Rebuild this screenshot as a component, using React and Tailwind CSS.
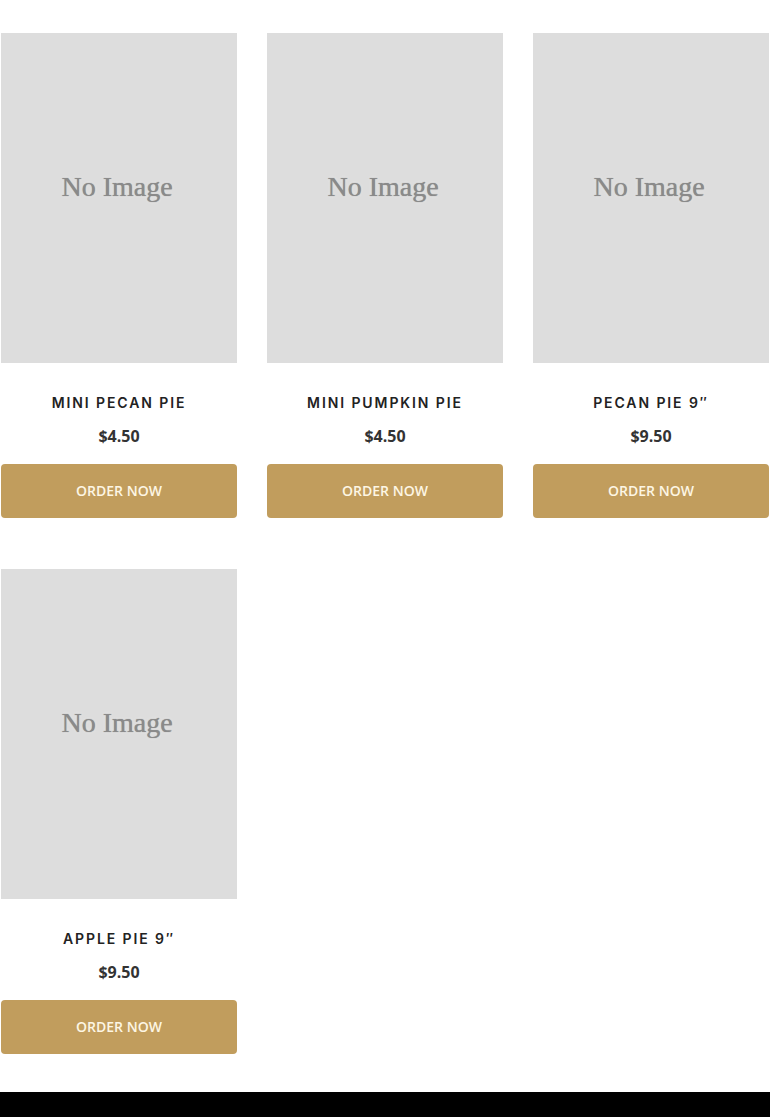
const products = [
  { name: 'Mini Pecan Pie', price: '$4.50' },
  { name: 'Mini Pumpkin Pie', price: '$4.50' },
  { name: 'Pecan Pie 9″', price: '$9.50' },
  { name: 'Apple Pie 9″', price: '$9.50' },
]

function ProductCard({ name, price }) {
  return (
    <div className="flex flex-col">
      <div className="h-[330px] bg-[#dddddd] flex items-center justify-center pb-[22px] pr-[4px]">
        <span
          className="text-[28px] text-[#8a8a8a]"
          style={{ fontFamily: '"Liberation Serif", serif', textShadow: '0 0 1px #8a8a8a, 0 0 3px #eeeeee' }}
        >
          No Image
        </span>
      </div>
      <h3
        className="mt-[31px] text-center text-[14px] leading-[18px] font-semibold uppercase tracking-[1.9px] text-[#222222]"
        style={{ fontFamily: 'Inter, "Open Sans", sans-serif' }}
      >
        {name}
      </h3>
      <p
        className="mt-[13px] text-center text-[16px] leading-[22px] font-bold text-[#333333]"
        style={{ fontFamily: '"Open Sans", sans-serif' }}
      >
        {price}
      </p>
      <button
        className="mt-[17px] h-[54px] w-full rounded-[4px] bg-[#c19d5d] pb-[2px] text-[14px] font-semibold uppercase text-[#fdf6e4]"
        style={{ fontFamily: '"Open Sans", sans-serif' }}
      >
        Order Now
      </button>
    </div>
  )
}

export default function App() {
  return (
    <div className="min-h-[1117px] bg-white flex flex-col">
      <div className="px-[1px] pt-[33px] pb-[38px]">
        <div className="grid grid-cols-3 gap-x-[30px] gap-y-[51px]">
          {products.map((p) => (
            <ProductCard key={p.name} {...p} />
          ))}
        </div>
      </div>
      <footer className="flex-1 bg-black min-h-[25px]" />
    </div>
  )
}
